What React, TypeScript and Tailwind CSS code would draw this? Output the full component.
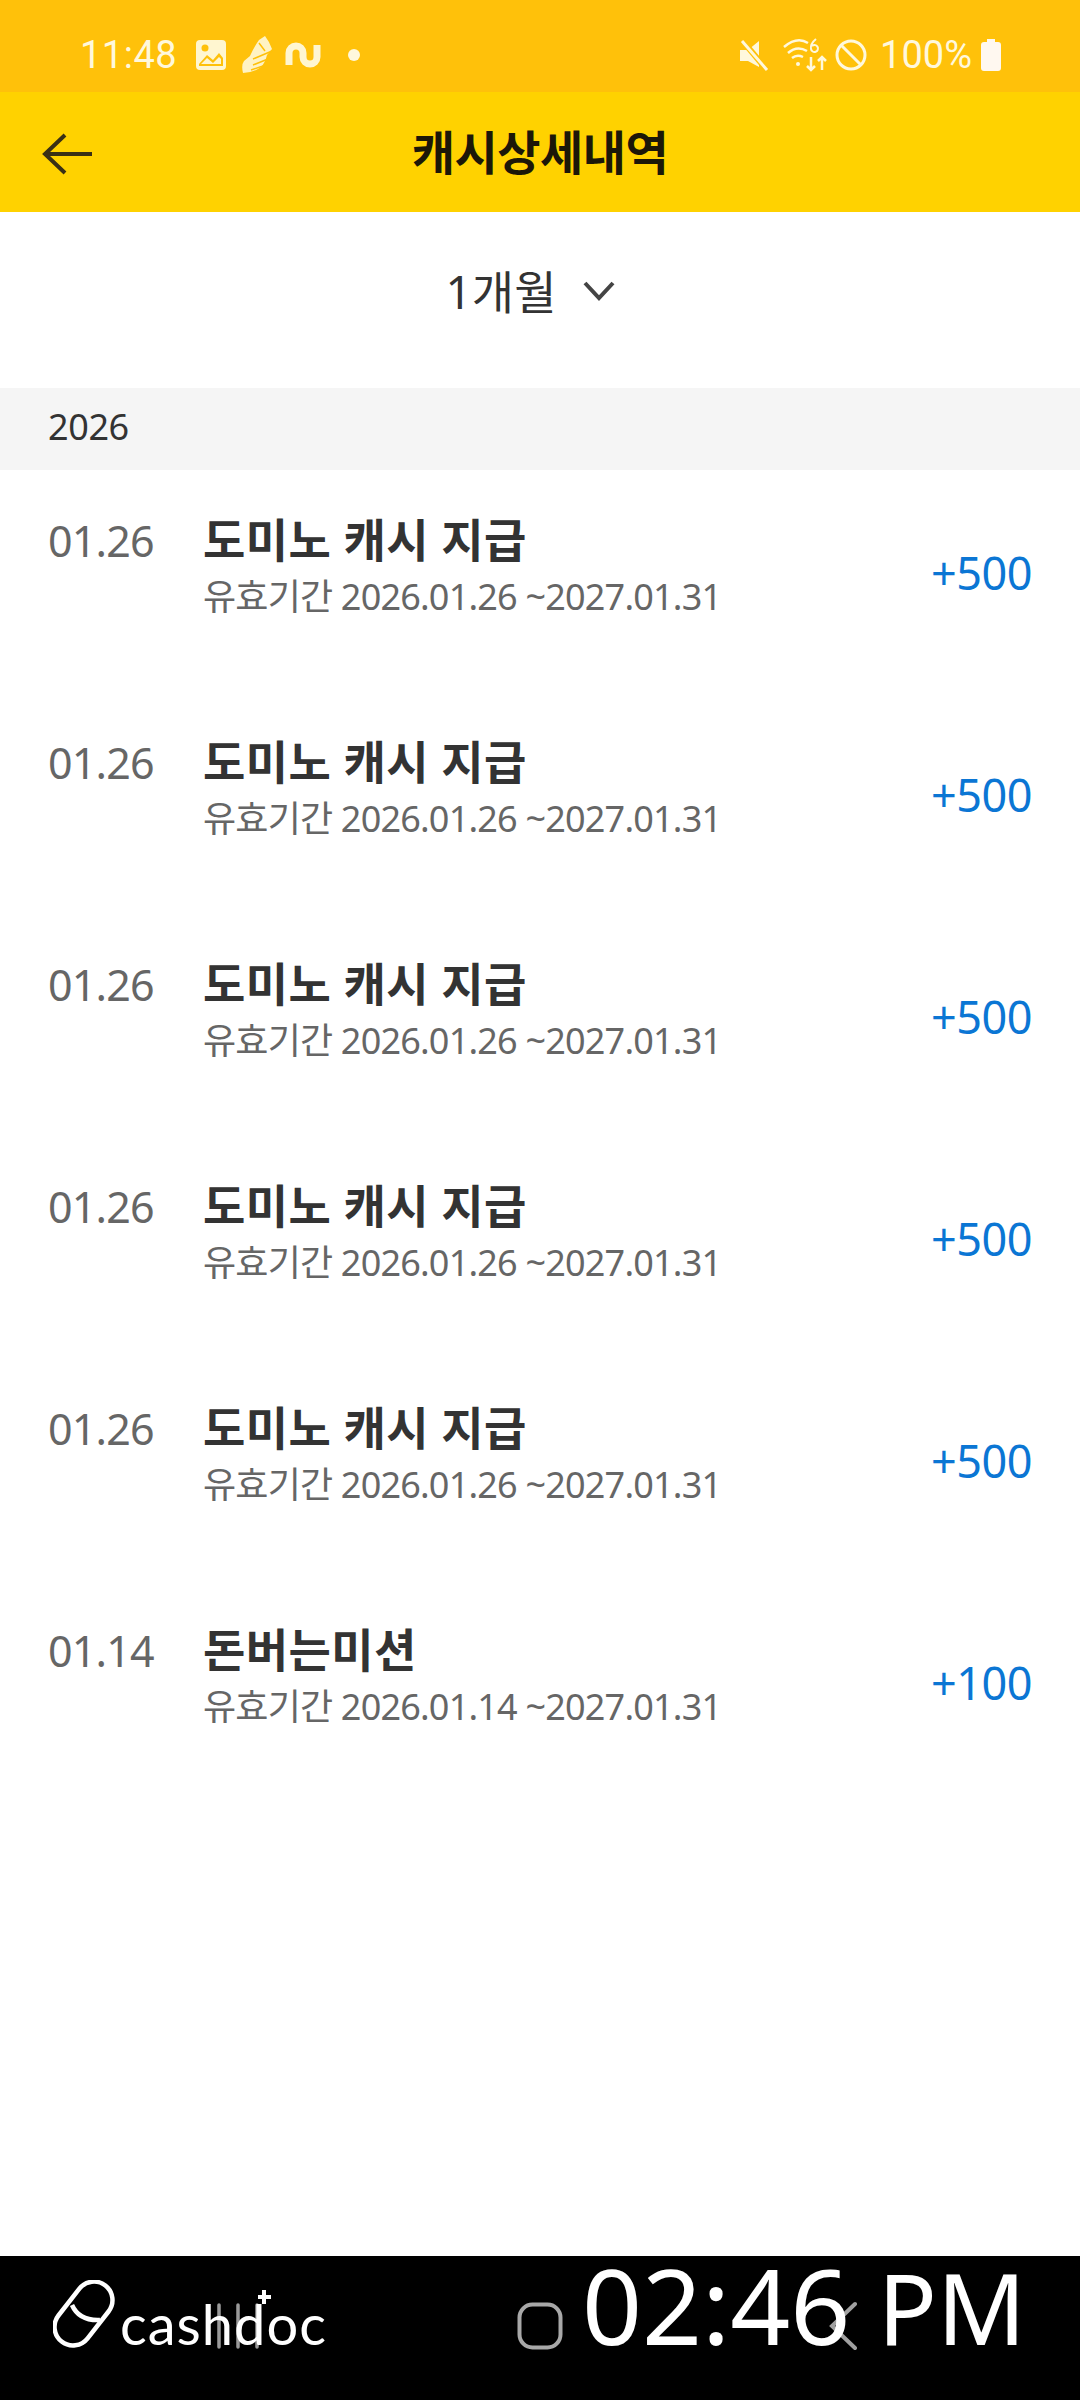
const KR = "font-['Noto_Sans','Noto_Sans_CJK_KR',sans-serif]";

const rows = [
  { d: "01.26", t: "도미노 캐시 지급", v: "유효기간 2026.01.26 ~2027.01.31", a: "+500" },
  { d: "01.26", t: "도미노 캐시 지급", v: "유효기간 2026.01.26 ~2027.01.31", a: "+500" },
  { d: "01.26", t: "도미노 캐시 지급", v: "유효기간 2026.01.26 ~2027.01.31", a: "+500" },
  { d: "01.26", t: "도미노 캐시 지급", v: "유효기간 2026.01.26 ~2027.01.31", a: "+500" },
  { d: "01.26", t: "도미노 캐시 지급", v: "유효기간 2026.01.26 ~2027.01.31", a: "+500" },
  { d: "01.14", t: "돈버는미션", v: "유효기간 2026.01.14 ~2027.01.31", a: "+100" },
];

function StatusBar() {
  return (
    <div className="h-[92px] bg-[#ffc10a] flex items-center justify-between pl-[80px] pr-[78px] pt-[18px] text-[#fff8dc] font-['Roboto',sans-serif]">
      <div className="flex items-center">
        <span className="text-[38px] leading-none tracking-[0.5px]">11:48</span>
        <svg className="ml-[18px]" width="32" height="32" viewBox="0 0 32 32">
          <rect x="1" y="1" width="30" height="30" rx="4" fill="#fff6d0" />
          <path d="M4 25 L12 16 L18 21 L24 14 L28 19 L28 27 L4 27 Z" fill="#ffc10a" />
          <path d="M6 25 L12 19 L18 24 L24 18 L26 20 L26 25 Z" fill="#fff6d0" />
          <circle cx="10" cy="9" r="3.5" fill="#ffc10a" />
        </svg>
        <svg className="ml-[14px]" width="32" height="40" viewBox="0 0 32 40">
          <path d="M2 38 Q0 30 3 26 L9 21 Q13 12 18 5 L24 1 Q28 6 31 14 L26 20 Q24 28 20 32 Q12 38 2 38 Z" fill="#fff3c4" />
          <path d="M12 24 L31 16 M12 30 L27 24 M10 35 L22 31 M18 8 L24 16" stroke="#ffc10a" strokeWidth="1.5" />
        </svg>
        <svg className="ml-[12px]" width="36" height="28" viewBox="0 0 36 28">
          <path d="M4 24 V12 a7 7 0 0 1 14 0 V16 a7 7 0 0 0 14 0 V4" fill="none" stroke="#fff6d0" strokeWidth="7" />
        </svg>
        <span className="ml-[27px] w-[12px] h-[12px] rounded-full bg-[#fff8dc]" />
      </div>
      <div className="flex items-center">
        <svg width="30" height="32" viewBox="0 0 30 32">
          <path d="M1 11 H9 L20 2 V28 L9 22 H1 Z" fill="#fff8dc" />
          <path d="M2 0 L28 31" stroke="#ffc10a" strokeWidth="6" />
          <path d="M3 2 L28 31" stroke="#fff8dc" strokeWidth="3" />
        </svg>
        <svg className="ml-[14px]" width="44" height="34" viewBox="0 0 44 34" fill="none" stroke="#fff8dc" strokeWidth="2.5">
          <path d="M1 9 Q14 -2 25 5 M5 15 Q14 7 24 13 M9 20 Q14 16 20 19" />
          <circle cx="15" cy="26" r="2" fill="#fff8dc" stroke="none" />
          <path d="M28 19 V32 M24 28 L28 32 L32 28 M39 32 V19 M35 23 L39 19 L43 23" />
          <path d="M33 1 Q27 6 28 11 A3.5 3.5 0 1 0 29 8" strokeWidth="2" />
        </svg>
        <svg className="ml-[8px]" width="32" height="32" viewBox="0 0 32 32" fill="none" stroke="#fff8dc" strokeWidth="3">
          <circle cx="16" cy="16" r="14" />
          <path d="M6 6 L26 26" />
        </svg>
        <span className="ml-[13px] text-[38px] leading-none">100%</span>
        <svg className="ml-[8px]" width="22" height="32" viewBox="0 0 22 32">
          <path d="M7 0 H15 V3 H18 Q21 3 21 6 V29 Q21 32 18 32 H4 Q1 32 1 29 V6 Q1 3 4 3 H7 Z" fill="#fff8f0" />
        </svg>
      </div>
    </div>
  );
}

function Header() {
  return (
    <div className="relative h-[120px] bg-[#ffd200] flex items-center justify-center">
      <svg className="absolute left-[42px] top-[40px]" width="52" height="44" viewBox="0 0 52 44" fill="none" stroke="#3a3015" strokeWidth="4">
        <path d="M50 22 H4 M23 3 L3 22 L23 41" />
      </svg>
      <span className={`${KR} text-[47px] leading-none font-bold text-[#1c1708] tracking-[-0.5px]`}>캐시상세내역</span>
    </div>
  );
}

function Row({ d, t, v, a }: { d: string; t: string; v: string; a: string }) {
  return (
    <div className={`${KR} h-[222px] flex items-start pl-[48px] pr-[48px] pt-[43px]`}>
      <span className="w-[155px] text-[43px] leading-[56px] text-[#666] tracking-[-0.8px]">{d}</span>
      <div className="flex-1 flex flex-col mt-[-2px]">
        <span className="text-[46px] leading-[56px] font-bold text-[#333] tracking-[0.4px]">{t}</span>
        <span className="text-[36px] leading-[56px] mt-[2px] text-[#666] tracking-[-0.8px]">{v}</span>
      </div>
      <span className="text-[45px] leading-[56px] mt-[32px] text-[#0b76d4] tracking-[-0.5px]">{a}</span>
    </div>
  );
}

function BottomBar() {
  return (
    <div className="relative mt-auto h-[144px] bg-black">
      {/* nav icons */}
      <svg className="absolute left-[215px] top-[47px]" width="46" height="46" viewBox="0 0 46 46" fill="none" stroke="#9a9a9a" strokeWidth="3.5" strokeLinecap="round">
        <path d="M4 2 V44 M23 2 V44 M42 2 V44" />
      </svg>
      <svg className="absolute left-[517px] top-[46px]" width="46" height="48" viewBox="0 0 46 48" fill="none">
        <rect x="2.5" y="2.5" width="41" height="43" rx="13" stroke="#a8a8a8" strokeWidth="4" />
      </svg>
      <svg className="absolute left-[829px] top-[45px]" width="28" height="50" viewBox="0 0 28 50" fill="none" stroke="#a0a0a0" strokeWidth="4" strokeLinecap="round">
        <path d="M26 3 L3 25 L26 47" />
      </svg>
      {/* logo */}
      <svg className="absolute left-[53px] top-[24px]" width="62" height="70" viewBox="0 0 62 70" fill="none" stroke="#fff" strokeWidth="4.5">
        <rect x="12" y="-2" width="37" height="71" rx="18.5" transform="rotate(38 30.5 33.5)" />
        <path d="M19 25 Q26 41 47 40" />
      </svg>
      <span className="absolute left-[120px] top-[28px] text-[56px] leading-[80px] font-['Lato',sans-serif] text-white tracking-[1px]">cashdoc</span>
      <span className="absolute left-[258px] top-[39px] w-[13px] h-[4px] bg-white" />
      <span className="absolute left-[262px] top-[34px] w-[4px] h-[14px] bg-white" />
      {/* clock */}
      <span className="absolute left-[582px] top-0 text-[105px] leading-[98px] font-['Noto_Sans',sans-serif] text-white whitespace-nowrap">
        02:46 <span className="text-[98px]">PM</span>
      </span>
    </div>
  );
}

export default function App() {
  return (
    <div className="w-[1080px] h-[2400px] bg-white flex flex-col overflow-hidden">
      <StatusBar />
      <Header />
      <div className={`${KR} h-[176px] flex items-center justify-center gap-[26px] pb-[18px] pr-[18px]`}>
        <span className="text-[46px] leading-none text-[#333]">1개월</span>
        <svg width="34" height="22" viewBox="0 0 34 22" fill="none" stroke="#444" strokeWidth="4">
          <path d="M3 3 L17 18 L31 3" />
        </svg>
      </div>
      <div className={`${KR} h-[82px] bg-[#f5f5f5] flex items-center pl-[48px] pb-[4px] text-[36px] text-[#333] tracking-[-0.4px]`}>2026</div>
      <div className="flex flex-col">
        {rows.map((r, i) => (
          <Row key={i} {...r} />
        ))}
      </div>
      <BottomBar />
    </div>
  );
}
